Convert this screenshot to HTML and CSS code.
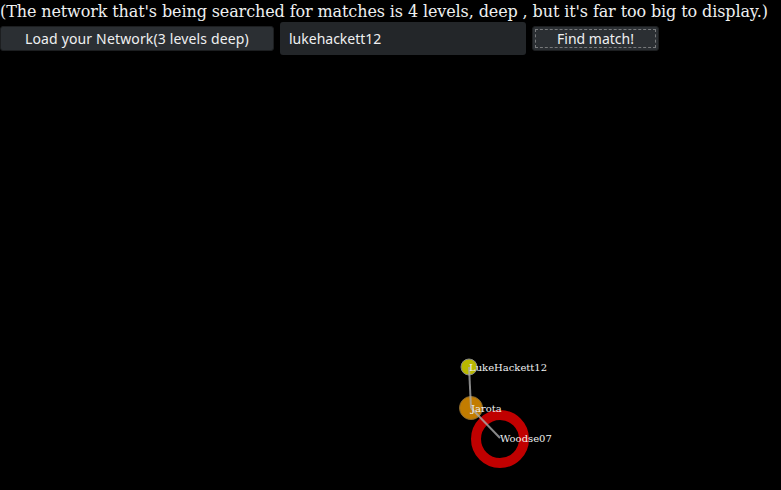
FILE: index.html
```html
<!DOCTYPE html>
<html>
<head>
<meta charset="utf-8">
<link rel="stylesheet" href="styles.css">
</head>
<body>
<div class="intro">(The network that's being searched for matches is 4 levels, deep , but it's far too big to display.)</div>
<div class="controls">
  <button class="btn load">Load your Network(3 levels deep)</button>
  <input class="field" type="text" value="lukehackett12">
  <button class="btn find"><span class="focus">Find match!</span></button>
</div>
<svg class="graph" width="781" height="435" viewBox="0 55 781 435">
  <circle cx="471" cy="408" r="11.5" fill="#c27c00" stroke="#8a6a30" stroke-width="1"/>
  <circle cx="469" cy="367" r="8" fill="#b8b800" stroke="#888" stroke-width="1"/>
  <circle cx="500" cy="439" r="24" fill="none" stroke="#c00000" stroke-width="10"/>
  <line x1="469" y1="367" x2="471" y2="408" stroke="#aaa" stroke-opacity="0.8" stroke-width="2"/>
  <line x1="471" y1="408" x2="500" y2="438" stroke="#aaa" stroke-opacity="0.8" stroke-width="2"/>
  <text x="469" y="371" class="lbl">LukeHackett12</text>
  <text x="471" y="412" class="lbl">Jarota</text>
  <text x="500" y="442" class="lbl">Woodse07</text>
</svg>
</body>
</html>
```
FILE: styles.css
```css
html, body {
  margin: 0;
  padding: 0;
  background: #000;
  overflow: hidden;
}
body {
  width: 781px;
  height: 490px;
}
.intro {
  font-family: "DejaVu Serif", serif;
  font-size: 16px;
  letter-spacing: -0.11px;
  line-height: 21px;
  color: #eff0f1;
  padding-top: 1px;
  white-space: nowrap;
}
.controls {
  display: flex;
  align-items: center;
  height: 33px;
}
.btn {
  font-family: "Noto Sans", "DejaVu Sans", sans-serif;
  font-size: 14px;
  color: #eff0f1;
  background: #2b2f33;
  border: 1px solid #1c1e20;
  border-radius: 3px;
  height: 25px;
  padding: 0;
  display: flex;
  align-items: center;
  justify-content: center;
}
.load {
  width: 274px;
  margin-right: 6px;
  letter-spacing: 0.15px;
}
.field {
  box-sizing: border-box;
  width: 246px;
  height: 33px;
  background: #232629;
  border: none;
  border-radius: 3px;
  color: #eff0f1;
  font-family: "Noto Sans", "DejaVu Sans", sans-serif;
  font-size: 14px;
  padding: 0 9px;
  margin-right: 6px;
  outline: none;
}
.find {
  width: 127px;
  padding: 2px;
}
.focus {
  flex: 1;
  align-self: stretch;
  display: flex;
  align-items: center;
  justify-content: center;
  border: 1px dashed #77797b;
}
.graph {
  display: block;
}
.lbl {
  font-family: "DejaVu Serif", serif;
  font-size: 10px;
  fill: #eff0f1;
}
```
